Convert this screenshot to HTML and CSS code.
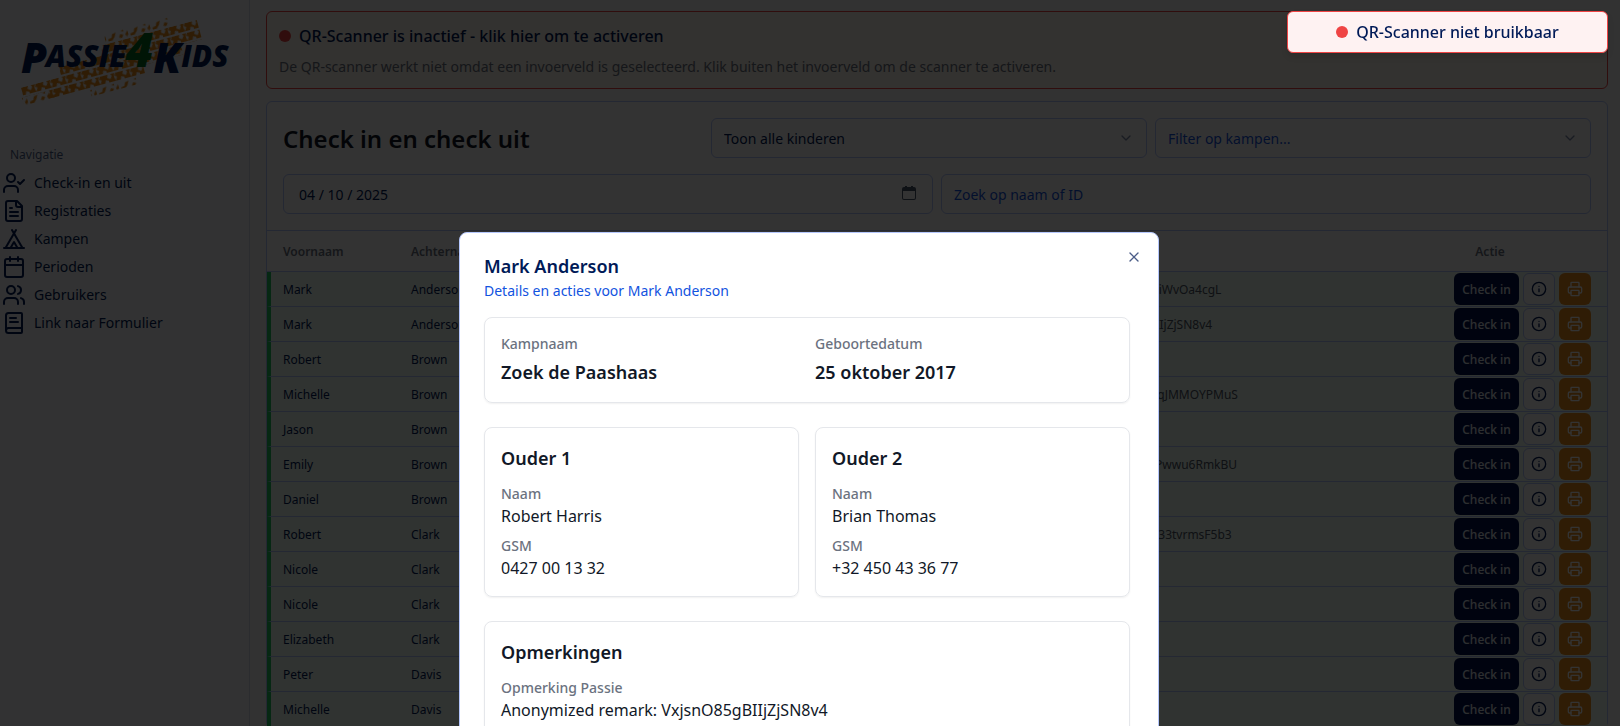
FILE: index.html
```html
<!DOCTYPE html>
<html lang="nl">
<head>
<meta charset="utf-8">
<meta name="viewport" content="width=device-width, initial-scale=1">
<title>Passie4Kids - Check in en check uit</title>
<link rel="stylesheet" href="styles.css">
</head>
<body>
<svg class="sprite" aria-hidden="true">
  <symbol id="user-check" viewBox="0 0 24 24"><path d="M16 21v-2a4 4 0 0 0-4-4H6a4 4 0 0 0-4 4v2"/><circle cx="9" cy="7" r="4"/><path d="m16 11 2 2 4-4"/></symbol>
  <symbol id="file-text" viewBox="0 0 24 24"><path d="M15 2H6a2 2 0 0 0-2 2v16a2 2 0 0 0 2 2h12a2 2 0 0 0 2-2V7Z"/><path d="M14 2v4a2 2 0 0 0 2 2h4"/><path d="M10 9H8"/><path d="M16 13H8"/><path d="M16 17H8"/></symbol>
  <symbol id="tent" viewBox="0 0 24 24"><path d="M3.500 21 14 3"/><path d="M20.500 21 10 3"/><path d="M15.500 21 12 15l-3.500 6"/><path d="M2 21h20"/></symbol>
  <symbol id="calendar" viewBox="0 0 24 24"><path d="M8 2v4"/><path d="M16 2v4"/><rect width="18" height="18" x="3" y="4" rx="2"/><path d="M3 10h18"/></symbol>
  <symbol id="users" viewBox="0 0 24 24"><path d="M16 21v-2a4 4 0 0 0-4-4H6a4 4 0 0 0-4 4v2"/><circle cx="9" cy="7" r="4"/><path d="M22 21v-2a4 4 0 0 0-3-3.870"/><path d="M16 3.130a4 4 0 0 1 0 7.750"/></symbol>
  <symbol id="book-text" viewBox="0 0 24 24"><path d="M4 19.500v-15A2.500 2.500 0 0 1 6.500 2H19a1 1 0 0 1 1 1v18a1 1 0 0 1-1 1H6.500a1 1 0 0 1 0-5H20"/><path d="M8 11h8"/><path d="M8 7h6"/></symbol>
  <symbol id="chevron" viewBox="0 0 24 24"><path d="m6 9 6 6 6-6"/></symbol>
  <symbol id="close" viewBox="0 0 24 24"><path d="M18 6 6 18"/><path d="m6 6 12 12"/></symbol>
  <symbol id="info" viewBox="0 0 24 24"><circle cx="12" cy="12" r="10"/><path d="M12 16v-4"/><path d="M12 8h.01"/></symbol>
  <symbol id="printer" viewBox="0 0 24 24"><path d="M6 18H4a2 2 0 0 1-2-2v-5a2 2 0 0 1 2-2h16a2 2 0 0 1 2 2v5a2 2 0 0 1-2 2h-2"/><path d="M6 9V3a1 1 0 0 1 1-1h10a1 1 0 0 1 1 1v6"/><rect x="6" y="14" width="12" height="8" rx="1"/></symbol>
</svg>

<div class="app">
  <aside class="sidebar">
    <svg class="logo" viewBox="0 0 250 120" role="img" aria-label="Passie4Kids">
      <defs>
        <pattern id="tread" width="16" height="10" patternUnits="userSpaceOnUse">
          <path fill="#ea8c1c" d="M0 8 2 4 0 3 1 0H9L8 3l3 2 2-3-1-2h4l-1 4 1 4h-7L9 6 6 5 5 8Z"/>
        </pattern>
        <pattern id="grit" width="23" height="10" patternUnits="userSpaceOnUse">
          <path fill="#ea8c1c" d="M0 6 4 5 5 2 9 1 7 5 4 8H0ZM11 7l2-3 3 1-2 3ZM14 1l3-1v2ZM18 5l3-3v4l-2 2Z"/>
        </pattern>
      </defs>
      <g transform="rotate(-15 125 62)">
        <rect x="112" y="30" width="66" height="10" fill="url(#grit)"/>
        <rect x="106" y="40" width="100" height="10" fill="url(#tread)"/>
        <rect x="60" y="50" width="146" height="10" fill="url(#tread)"/>
        <rect x="18" y="60" width="166" height="10" fill="url(#tread)"/>
        <rect x="16" y="70" width="34" height="9" fill="url(#grit)"/>
        <rect x="42" y="70" width="100" height="9" fill="url(#tread)"/>
        <rect x="84" y="80" width="48" height="7" fill="url(#grit)"/>
      </g>
      <g class="logo-text">
        <text x="21" y="73" font-size="42">P</text>
        <text x="46" y="67" font-size="30">ASSIE</text>
        <text class="logo-four" x="126" y="67" font-size="48">4</text>
        <text x="154" y="73" font-size="42">K</text>
        <text x="182" y="67" font-size="30">IDS</text>
      </g>
    </svg>
    <nav class="nav">
      <p class="nav-label">Navigatie</p>
      <a class="nav-item" href="#"><svg class="icon icon-lg"><use href="#user-check"/></svg>Check-in en uit</a>
      <a class="nav-item" href="#"><svg class="icon icon-lg"><use href="#file-text"/></svg>Registraties</a>
      <a class="nav-item" href="#"><svg class="icon icon-lg"><use href="#tent"/></svg>Kampen</a>
      <a class="nav-item" href="#"><svg class="icon icon-lg"><use href="#calendar"/></svg>Perioden</a>
      <a class="nav-item" href="#"><svg class="icon icon-lg"><use href="#users"/></svg>Gebruikers</a>
      <a class="nav-item" href="#"><svg class="icon icon-lg"><use href="#book-text"/></svg>Link naar Formulier</a>
    </nav>
  </aside>

  <main class="main">
    <section class="alert">
      <div class="status"><span class="dot"></span>QR-Scanner is inactief - klik hier om te activeren</div>
      <p class="alert-text">De QR-scanner werkt niet omdat een invoerveld is geselecteerd. Klik buiten het invoerveld om de scanner te activeren.</p>
    </section>

    <section class="panel">
      <header class="panel-head">
        <div class="row">
          <h1 class="title">Check in en check uit</h1>
          <div class="field third">
            <select class="control" aria-label="Toon kinderen"><option>Toon alle kinderen</option></select>
            <svg class="icon icon-sm chevron"><use href="#chevron"/></svg>
          </div>
          <div class="field third">
            <select class="control placeholder" aria-label="Kampen"><option>Filter op kampen...</option></select>
            <svg class="icon icon-sm chevron"><use href="#chevron"/></svg>
          </div>
        </div>
        <div class="row">
          <div class="field">
            <input class="control date" type="text" value="04 / 10 / 2025" aria-label="Datum">
            <svg class="date-icon" viewBox="0 0 14 14"><path d="M2 1h1V0h2v1h4V0h2v1h1a2 2 0 0 1 2 2v9a2 2 0 0 1-2 2H2a2 2 0 0 1-2-2V3a2 2 0 0 1 2-2ZM1 5v7a1 1 0 0 0 1 1h10a1 1 0 0 0 1-1V5Z" fill="currentColor" fill-rule="evenodd"/></svg>
          </div>
          <div class="field">
            <input class="control" type="text" placeholder="Zoek op naam of ID" aria-label="Zoek op naam of ID">
          </div>
        </div>
      </header>

      <table class="table">
        <colgroup><col class="col-first"><col class="col-last"><col><col class="col-action"></colgroup>
        <thead><tr><th>Voornaam</th><th>Achternaam</th><th></th><th class="center">Actie</th></tr></thead>
        <tbody id="children"></tbody>
      </table>
    </section>
  </main>
</div>

<div class="overlay">
  <div class="dialog" role="dialog" aria-labelledby="dialog-title">
    <button class="close" aria-label="Sluiten"><svg class="icon icon-sm"><use href="#close"/></svg></button>
    <header class="dialog-head">
      <h2 class="dialog-title" id="dialog-title">Mark Anderson</h2>
      <p class="dialog-desc">Details en acties voor Mark Anderson</p>
    </header>
    <div class="dialog-body">
      <section class="card columns">
        <div><p class="label">Kampnaam</p><p class="strong">Zoek de Paashaas</p></div>
        <div><p class="label">Geboortedatum</p><p class="strong">25 oktober 2017</p></div>
      </section>
      <div class="columns">
        <section class="card">
          <h3 class="card-title">Ouder 1</h3>
          <div class="facts">
            <div><p class="label">Naam</p><p>Robert Harris</p></div>
            <div><p class="label">GSM</p><p>0427 00 13 32</p></div>
          </div>
        </section>
        <section class="card">
          <h3 class="card-title">Ouder 2</h3>
          <div class="facts">
            <div><p class="label">Naam</p><p>Brian Thomas</p></div>
            <div><p class="label">GSM</p><p>+32 450 43 36 77</p></div>
          </div>
        </section>
      </div>
      <section class="card">
        <h3 class="card-title">Opmerkingen</h3>
        <div class="facts">
          <div><p class="label">Opmerking Passie</p><p>Anonymized remark: VxjsnO85gBIIjZjSN8v4</p></div>
        </div>
      </section>
    </div>
  </div>
</div>

<div class="toast" role="status"><span class="dot"></span>QR-Scanner niet bruikbaar</div>
<script src="script.js"></script>
</body>
</html>
```

FILE: script.js
```js
const children = [
  ["Mark", "Anderson", "Kq2rTzR8tbYiWvOa4cgL"],
  ["Mark", "Anderson", "VxjsnO85gBIIjZjSN8v4"],
  ["Robert", "Brown"],
  ["Michelle", "Brown", "hT4xRsBn7dqJMMOYPMuS"],
  ["Jason", "Brown"],
  ["Emily", "Brown", "LrZ8kHds3nPwwu6RmkBU"],
  ["Daniel", "Brown"],
  ["Robert", "Clark", "Mds7GhNpK33tvrmsF5b3"],
  ["Nicole", "Clark"],
  ["Nicole", "Clark"],
  ["Elizabeth", "Clark"],
  ["Peter", "Davis"],
  ["Michelle", "Davis"],
];

const icon = (name) => `<svg class="icon icon-sm"><use href="#${name}"/></svg>`;

document.getElementById("children").innerHTML = children
  .map(([first, last, remark]) => `
    <tr>
      <td>${first}</td>
      <td>${last}</td>
      <td class="remark">${remark ? `Anonymized remark: ${remark}` : ""}</td>
      <td><div class="actions">
        <button class="btn primary">Check in</button>
        <button class="btn outline" aria-label="Info">${icon("info")}</button>
        <button class="btn orange" aria-label="Print">${icon("printer")}</button>
      </div></td>
    </tr>`)
  .join("");
```

FILE: styles.css
```css
:root {
  --navy: #001a57;
  --blue: #1253e0;
  --line: #b4c6fc;
  --red: #ef4444;
  --ink: #111827;
  --muted: #6b7280;
}

*, *::before, *::after { box-sizing: border-box; }

body, h1, h2, h3, p { margin: 0; }

body {
  height: 100vh;
  overflow: hidden;
  background: #fafafa;
  color: var(--navy);
  font-family: "Noto Sans", "Open Sans", sans-serif;
  font-size: 14px;
  line-height: 20px;
}

button, input, select { font: inherit; color: inherit; }

.sprite { position: absolute; width: 0; height: 0; }

.icon {
  flex: none;
  fill: none;
  stroke: currentColor;
  stroke-width: 2;
  stroke-linecap: round;
  stroke-linejoin: round;
}
.icon-lg { width: 24px; height: 24px; }
.icon-sm { width: 16px; height: 16px; }

.app { display: flex; align-items: stretch; min-height: 100vh; }

/* Sidebar */
.sidebar {
  flex: none;
  width: 250px;
  background: #f8fafc;
  border-right: 1px solid #d5dcea;
}
.logo { display: block; width: 100%; height: 120px; }
.logo-text {
  fill: #001a57;
  font-family: "Open Sans", "Noto Sans", sans-serif;
  font-weight: 800;
  font-style: italic;
}
.logo-four { fill: #006a22; }
.nav { display: flex; flex-direction: column; gap: 4px; padding: 23px 2px; }
.nav-label {
  padding: 4px 8px;
  font-size: 12px;
  line-height: 16px;
  opacity: .7;
}
.nav-item {
  display: flex;
  align-items: center;
  gap: 8px;
  height: 24px;
  color: inherit;
  text-decoration: none;
}

/* Main area */
.main {
  flex: 1;
  min-width: 0;
  display: flex;
  flex-direction: column;
  gap: 12px;
  padding: 11px 12px 0 16px;
}

.alert {
  display: flex;
  flex-direction: column;
  gap: 8px;
  padding: 12px 12px 10px;
  border: 1px solid var(--red);
  border-radius: 6px;
  background: #fff7ed;
}
.alert-text { color: var(--muted); line-height: 22px; }
.status, .toast {
  display: flex;
  align-items: center;
  gap: 8px;
  font-size: 16px;
  font-weight: 500;
  line-height: 24px;
}
.dot { flex: none; width: 12px; height: 12px; border-radius: 50%; background: var(--red); }

.panel { border: 1px solid var(--line); border-radius: 6px; background: #fff; }
.panel-head {
  display: flex;
  flex-direction: column;
  gap: 16px;
  padding: 16px;
  border-bottom: 1px solid var(--line);
}
.row { display: flex; align-items: center; gap: 8px; }
.title {
  flex: 1;
  padding-top: 2px;
  color: var(--ink);
  font-size: 24px;
  font-weight: 600;
  line-height: 32px;
}
.field { position: relative; flex: 1; }
.third { flex: none; width: 33.333%; }
.control {
  display: block;
  width: 100%;
  height: 40px;
  padding: 0 12px;
  border: 1px solid var(--line);
  border-radius: 6px;
  background: transparent;
  appearance: none;
}
select.control { padding-top: 2px; }
.control::placeholder { color: var(--blue); opacity: 1; }
.placeholder { color: var(--blue); }
.date { padding-left: 15px; }
.chevron { position: absolute; top: 12px; right: 13px; opacity: .5; pointer-events: none; }
.date-icon { position: absolute; top: 12px; right: 17px; width: 14px; height: 14px; color: #475569; }

/* Table */
.table {
  width: 100%;
  table-layout: fixed;
  border-spacing: 0;
  font-size: 12px;
  line-height: 16px;
}
.col-first { width: 128px; }
.col-last { width: 41.500%; }
.col-action { width: 234px; }
.table th {
  height: 41px;
  padding: 2px 16px 0;
  border-bottom: 1px solid var(--line);
  color: var(--muted);
  font-weight: 600;
  text-align: left;
}
.table th.center { text-align: center; }
.table td {
  padding: 2px 16px 0;
  border-bottom: 1px solid var(--line);
  background: #f0fdf4;
  white-space: nowrap;
}
.table td:first-child { border-left: 4px solid #22c55e; padding-left: 12px; }
.table td:last-child { padding: 1px 16px; }
.table .remark { color: #4b5563; }
.actions { display: flex; justify-content: flex-end; gap: 4px; }
.btn {
  display: flex;
  align-items: center;
  justify-content: center;
  width: 32px;
  height: 32px;
  padding: 0;
  border: 0;
  border-radius: 6px;
  font-size: 12px;
  font-weight: 500;
}
.primary { width: 65px; padding-top: 2px; background: #00134d; color: #e2e8f0; }
.outline { border: 1px solid var(--line); background: #fff; }
.orange { background: #ea8c1c; color: #fff; }

/* Dialog */
.overlay {
  position: fixed;
  inset: 0;
  display: flex;
  align-items: flex-start;
  justify-content: center;
  padding: 232px 2px 0 0;
  overflow: hidden;
  background: rgba(0, 0, 0, .8);
}
.dialog {
  position: relative;
  display: flex;
  flex-direction: column;
  gap: 16px;
  width: 700px;
  padding: 24px;
  border: 1px solid var(--line);
  border-radius: 8px;
  background: #fff;
}
.dialog-head { display: flex; flex-direction: column; gap: 6px; }
.dialog-title { font-size: 18px; font-weight: 600; line-height: 18px; }
.dialog-desc { color: var(--blue); }
.close {
  position: absolute;
  top: 16px;
  right: 16px;
  display: flex;
  padding: 0;
  border: 0;
  background: none;
  opacity: .7;
}
.dialog-body {
  display: flex;
  flex-direction: column;
  gap: 24px;
  padding-right: 4px;
  color: var(--ink);
  font-size: 16px;
  line-height: 24px;
}
.columns { display: grid; grid-template-columns: 1fr 1fr; gap: 16px; }
.card {
  padding: 16px;
  border: 1px solid #e5e7eb;
  border-radius: 8px;
  box-shadow: 0 1px 2px rgba(0, 0, 0, .06);
}
.label { color: var(--muted); font-size: 14px; font-weight: 500; line-height: 20px; }
.strong { margin-top: 4px; font-size: 18px; font-weight: 600; line-height: 28px; }
.card-title { margin-bottom: 12px; font-size: 18px; font-weight: 600; line-height: 28px; }
.facts { display: flex; flex-direction: column; gap: 8px; }

/* Toast */
.toast {
  position: fixed;
  top: 11px;
  right: 12px;
  justify-content: center;
  width: 321px;
  padding: 8px;
  border: 1px solid var(--red);
  border-radius: 6px;
  background: #fef2f2;
  box-shadow: 0 4px 6px rgba(0, 0, 0, .1);
}
```
